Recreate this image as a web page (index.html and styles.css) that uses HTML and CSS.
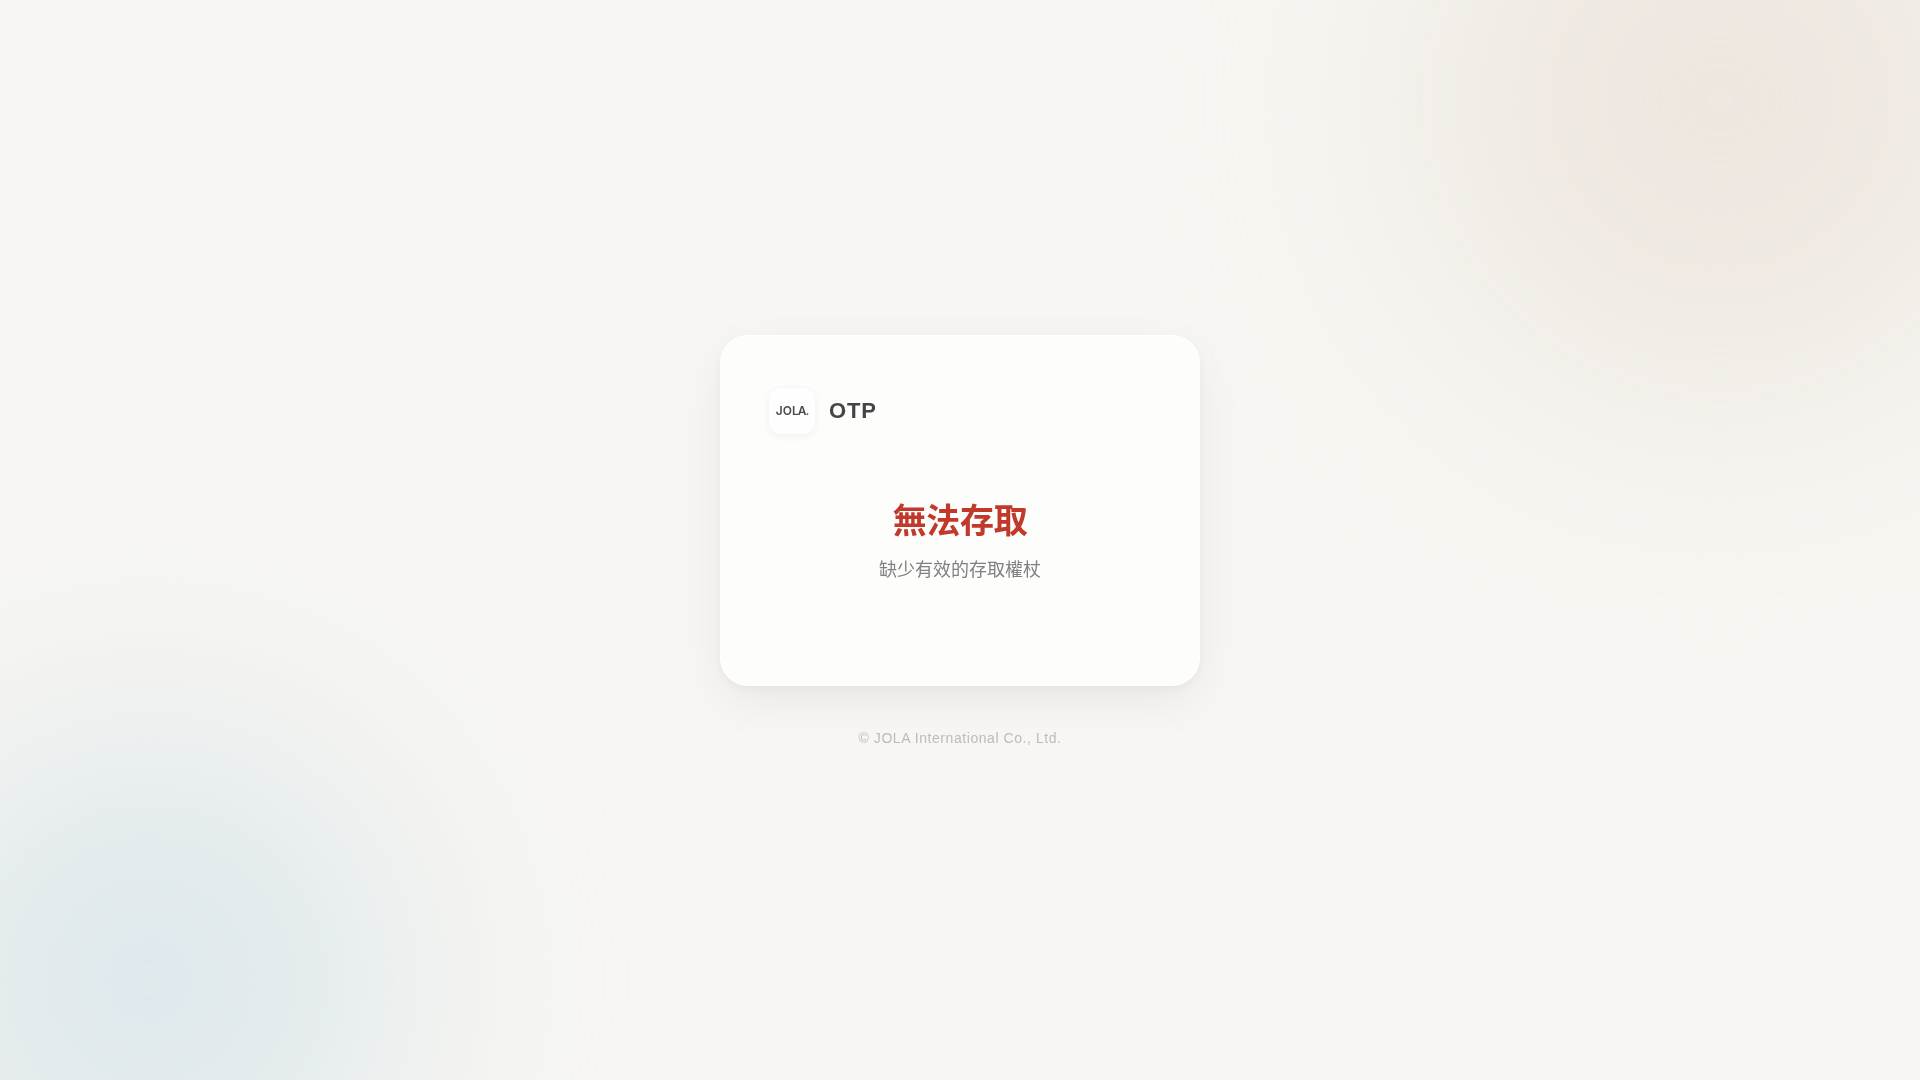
FILE: index.html
```
<!DOCTYPE html>
<html lang="zh-Hant">
<head>
  <meta charset="UTF-8" />
  <meta name="viewport" content="width=device-width, initial-scale=1.0" />
  <title>JOLA OTP</title>
  <link rel="stylesheet" href="styles.css">
</head>
<body>
  <div class="backdrop"></div>

  <main class="card">
    <header class="brand">
      <div class="brand-logo">
        <span class="brand-mark">JO<span class="tight">LA.</span></span>
      </div>
      <span class="brand-name">OTP</span>
    </header>

    <section class="message">
      <h1>無法存取</h1>
      <p>缺少有效的存取權杖</p>
    </section>
  </main>

  <footer>© JOLA International Co., Ltd.</footer>
</body>
</html>
```

FILE: styles.css
```
* {
  box-sizing: border-box;
  margin: 0;
  padding: 0;
}

body {
  display: flex;
  flex-direction: column;
  align-items: center;
  justify-content: center;
  min-height: 100vh;
  background-color: #f7f6f2;
  color: #444;
  font-family: "Liberation Sans", "Noto Sans CJK TC", sans-serif;
}

/* Soft colour blobs in the corners */
.backdrop {
  position: fixed;
  inset: 0;
  z-index: -1;
  overflow: hidden;
}

.backdrop::before,
.backdrop::after {
  content: "";
  position: absolute;
  border-radius: 50%;
  filter: blur(110px);
}

.backdrop::before {
  top: -200px;
  right: -100px;
  width: 600px;
  height: 600px;
  background: #eee7e0;
}

.backdrop::after {
  bottom: -150px;
  left: -100px;
  width: 500px;
  height: 500px;
  background: #dee8ec;
}

.card {
  width: 90%;
  max-width: 480px;
  padding: 52px 48px;
  border: 1px solid #fff;
  border-radius: 28px;
  background: #fdfdfc;
  box-shadow: 0 16px 48px rgba(0, 0, 0, 0.06), 0 4px 12px rgba(0, 0, 0, 0.04);
}

.brand {
  display: flex;
  align-items: center;
  gap: 14px;
}

.brand-logo {
  display: flex;
  align-items: center;
  justify-content: center;
  width: 46px;
  height: 46px;
  border-radius: 12px;
  background: #fefefe;
  box-shadow: 0 2px 8px rgba(0, 0, 0, 0.06);
}

/* Wordmark: the last letters run into each other */
.brand-mark {
  color: #4a4a4a;
  font-family: Inter, sans-serif;
  font-size: 12px;
  font-weight: 600;
}

.brand-mark .tight {
  letter-spacing: -1px;
}

.brand-name {
  font-size: 22px;
  font-weight: 700;
  letter-spacing: 0.04em;
}

.message {
  padding: 63px 0 50px;
  text-align: center;
}

.message h1 {
  margin-bottom: 12px;
  color: #c0392b;
  font-size: 34px;
  font-weight: 700;
  line-height: 48px;
  letter-spacing: -0.01em;
}

.message p {
  color: #808080;
  font-size: 18px;
  line-height: 26px;
}

footer {
  margin-top: 44px;
  color: #bbb;
  font-size: 14px;
  line-height: 16px;
  letter-spacing: 0.04em;
}
```
